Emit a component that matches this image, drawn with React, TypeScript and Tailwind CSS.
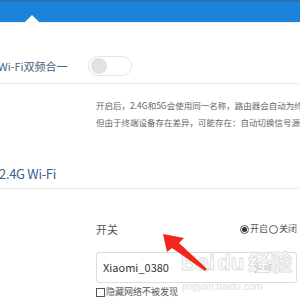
import React from 'react';

const cjk = { fontFamily: '"Microsoft YaHei", "Noto Sans CJK SC", "Noto Sans", sans-serif' };

function Toggle() {
  return (
    <div className="w-[44px] h-[20px] rounded-full border border-[#e4e4e4] bg-white flex items-center px-[2px]">
      <div className="w-[16px] h-[16px] rounded-full bg-[#e2e2e4]" />
    </div>
  );
}

function RedArrow() {
  return (
    <svg className="absolute left-[150px] top-[225px]" width="70" height="55" viewBox="0 0 70 55">
      <polygon points="13,9 34,13 29,18 57,44 55,46 22,23 17,27" fill="#f0271c" />
    </svg>
  );
}

function TopBar() {
  return (
    <div className="w-full h-[22px] bg-[#1b83dc] border-t-[2px] border-t-[#2b6fae] flex items-end pl-[25px]">
      <svg width="14" height="7" viewBox="0 0 14 7" className="block">
        <polygon points="0,7 7,0 14,7" fill="#ffffff" />
      </svg>
    </div>
  );
}

export default function App() {
  return (
    <div className="relative w-[300px] h-[300px] overflow-hidden bg-white" style={cjk}>
      <TopBar />
      <div className="h-px bg-[#eef1f4]" />

      {/* dual band */}
      <div className="h-[61px] border-b border-[#ececec] pt-[33px]">
        <div className="flex items-center -ml-[2px]">
          <span className="text-[11px] text-[#4d5f7f] w-[90px]">Wi-Fi双频合一</span>
          <Toggle />
        </div>
      </div>

      <div className="pl-[96px] pt-[13px] text-[8.5px] leading-[17px] text-[#666] whitespace-nowrap">
        <p>开启后，2.4G和5G会使用同一名称，路由器会自动为终端选择最优</p>
        <p>但由于终端设备存在差异，可能存在：自动切换信号源</p>
      </div>

      <div className="h-[58px] border-b border-[#ececec] pt-[29px] -ml-[1px]">
        <span className="text-[13px] leading-[18px] text-[#3d5f8c] tracking-tight">2.4G Wi-Fi</span>
      </div>

      <div className="pl-[96px] pt-[30px] pr-[3px]">
        <div className="flex items-center justify-between h-[20px]">
          <span className="text-[11px] leading-[20px] text-[#555]">开关</span>
          <div className="flex items-center text-[9px] leading-[12px] text-[#555]">
            <span className="w-[9px] h-[9px] rounded-full border border-[#555] flex items-center justify-center mr-[1px]">
              <span className="w-[5px] h-[5px] rounded-full bg-[#333]" />
            </span>
            <span>开启</span>
            <span className="w-[9px] h-[9px] rounded-full border border-[#555] ml-[1px] mr-[1px]" />
            <span>关闭</span>
          </div>
        </div>
        <div className="mt-[13px] h-[31px] border border-[#dcdcdc] rounded-[3px] flex items-center justify-between pl-[6px] pr-[24px]">
          <span className="text-[11px] text-[#333]">Xiaomi_0380</span>
          <span className="text-[10px] text-[#bbb]">名称</span>
        </div>
        <div className="flex items-center mt-[3px] text-[9px] leading-[12px] text-[#555]">
          <span className="w-[9px] h-[9px] border border-[#555] mr-[1px]" />
          <span>隐藏网络不被发现</span>
        </div>
      </div>

      {/* watermark */}
      <div className="absolute left-[181px] top-[252px] text-[22px] font-bold text-white leading-none" style={{ WebkitTextStroke: '1px #e0e0e0', fontFamily: '"Liberation Sans", "Noto Sans CJK SC", sans-serif' }}>
        Bai<span className="ml-[2px]">du</span><span className="ml-[4px]">经验</span>
      </div>
      <div className="absolute left-[182px] top-[282px] text-[10px] text-[#e0e0e0] leading-none" style={{ fontFamily: '"Liberation Sans", sans-serif' }}>
        jingyan.baidu.com
      </div>

      <RedArrow />
    </div>
  );
}
